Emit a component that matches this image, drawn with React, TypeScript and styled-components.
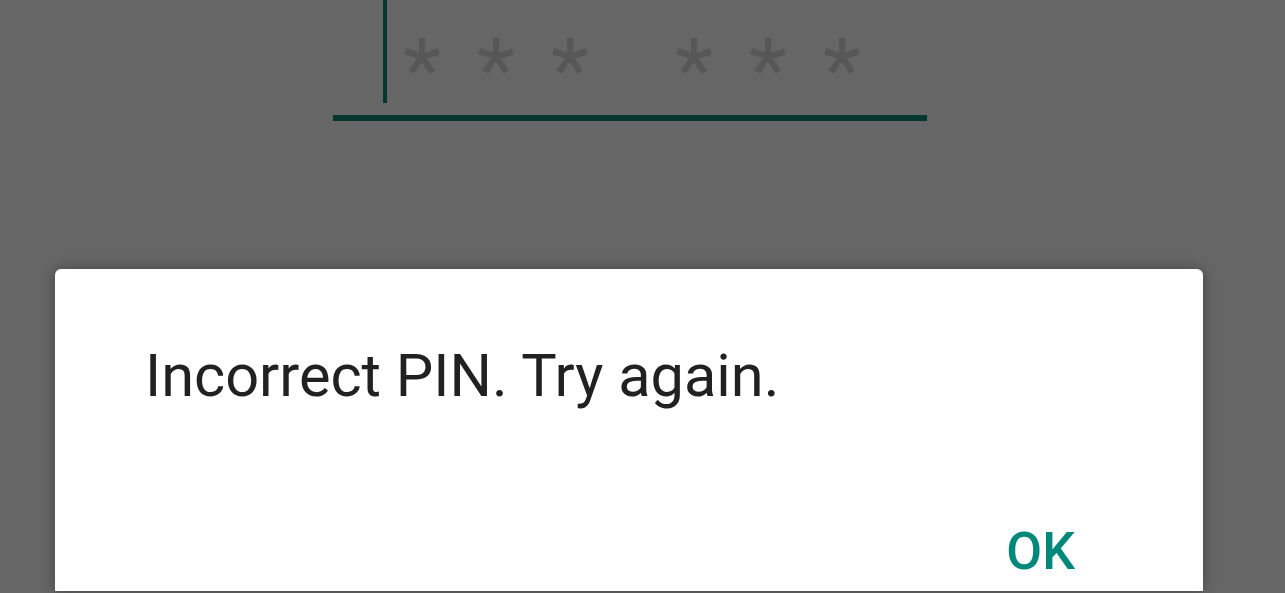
import React from "react";
import styled, { createGlobalStyle } from "styled-components";

const GlobalStyle = createGlobalStyle`
    html, body {
        margin: 0;
        padding: 0;
        height: 100%;
        overflow: hidden;
        background-color: #666666;
        font-family: Roboto, "Liberation Sans", sans-serif;
    }
`

const Screen = styled.div`
    display: flex;
    flex-direction: column;
    width: 1285px;
    height: 593px;
    overflow: hidden;
    background-color: #666666;
`

const PinField = styled.div`
    display: flex;
    flex-direction: column;
    margin-left: 333px;
    width: 594px;
    height: 269px;
`

const PinRow = styled.div`
    display: flex;
    align-items: flex-start;
    height: 103px;
    padding-left: 50px;
`

const Caret = styled.div`
    width: 4px;
    height: 103px;
    background-color: #00382f;
`

const Stars = styled.div`
    display: flex;
    gap: 88px;
    margin-left: 16px;
    margin-top: 52px;
`

const StarGroup = styled.div`
    display: flex;
    gap: 38px;
`

const Star = styled.span`
    font-size: 88px;
    line-height: 35px;
    height: 35px;
    color: #575757;
    width: 36px;
    text-align: center;
`

const Underline = styled.div`
    height: 6px;
    margin-top: 12px;
    background-color: #00382f;
`

const Dialog = styled.div`
    flex: 1;
    display: flex;
    flex-direction: column;
    margin: 0 82px 2px 55px;
    padding: 78px 128px 0 90px;
    background-color: #ffffff;
    border-radius: 6px 6px 0 0;
    box-shadow: 0 0 14px rgba(0, 0, 0, 0.35);
`

const Message = styled.div`
    font-size: 59.5px;
    line-height: 59px;
    color: #212121;
`

const Actions = styled.div`
    display: flex;
    justify-content: flex-end;
    margin-top: 120px;
`

const OkButton = styled.button`
    font-family: Roboto, "Liberation Sans", sans-serif;
    font-size: 52px;
    font-weight: 500;
    line-height: 52px;
    color: #00897b;
    background: none;
    border: none;
    padding: 0;
    cursor: pointer;
`

function App() {
    const groups = [["*", "*", "*"], ["*", "*", "*"]];

    return (
        <>
            <GlobalStyle />
            <Screen>
                <PinField>
                    <PinRow>
                        <Caret />
                        <Stars>
                            {groups.map((group, g) => (
                                <StarGroup key={g}>
                                    {group.map((s, i) => <Star key={i}>{s}</Star>)}
                                </StarGroup>
                            ))}
                        </Stars>
                    </PinRow>
                    <Underline />
                </PinField>
                <Dialog>
                    <Message>Incorrect PIN. Try again.</Message>
                    <Actions>
                        <OkButton>OK</OkButton>
                    </Actions>
                </Dialog>
            </Screen>
        </>
    );
}

export default App;
